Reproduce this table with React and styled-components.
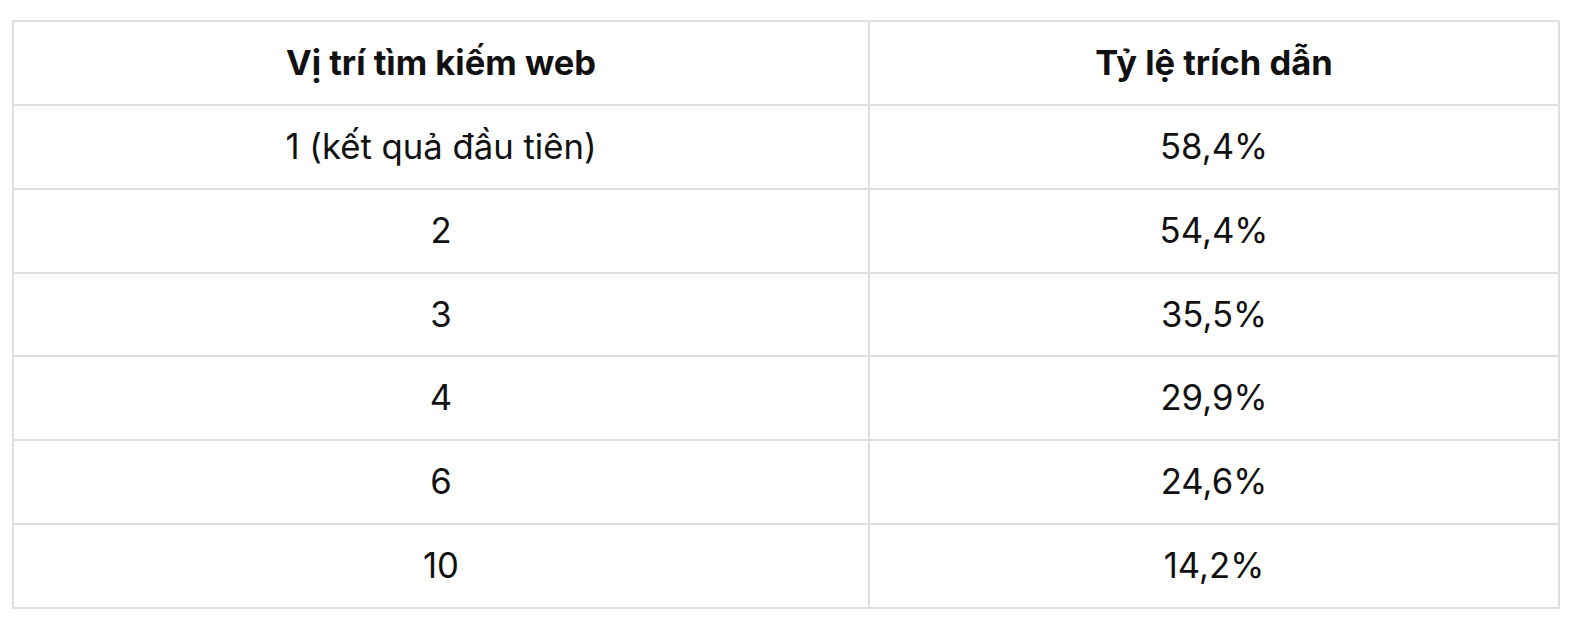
import React from "react";
import styled, { createGlobalStyle } from "styled-components";

const Global = createGlobalStyle`
  html, body { margin: 0; padding: 0; background: #ffffff; }
  body { font-family: Inter, "Noto Sans", sans-serif; color: #111111; }
`;

const Page = styled.div`
  padding: 20px 16px 20px 12px;
`;

const Table = styled.table`
  border-collapse: separate;
  border-spacing: 0;
  border-top: 2px solid #dedede;
  border-left: 2px solid #dedede;
  table-layout: fixed;
  width: 1546px;
`;

const Col = styled.col`
  width: ${(p) => p.$w}px;
`;

const Cell = styled.td`
  box-sizing: border-box;
  height: 83.857px;
  padding: 0 16px;
  border-right: 2px solid #dedede;
  border-bottom: 2px solid #dedede;
  text-align: center;
  vertical-align: middle;
  font-size: ${(p) => (p.$head ? "34.5px" : "34.7px")};
  line-height: 1.2;
  font-weight: ${(p) => (p.$head ? 700 : 400)};
  letter-spacing: 0;
  color: #111111;
`;

const rows = [
  ["1 (kết quả đầu tiên)", "58,4%"],
  ["2", "54,4%"],
  ["3", "35,5%"],
  ["4", "29,9%"],
  ["6", "24,6%"],
  ["10", "14,2%"],
];

export default function App() {
  return (
    <>
      <Global />
      <Page>
        <Table>
          <colgroup>
            <Col $w={856} />
            <Col $w={690} />
          </colgroup>
          <thead>
            <tr>
              <Cell as="th" $head>Vị trí tìm kiếm web</Cell>
              <Cell as="th" $head>Tỷ lệ trích dẫn</Cell>
            </tr>
          </thead>
          <tbody>
            {rows.map(([a, b]) => (
              <tr key={a}>
                <Cell>{a}</Cell>
                <Cell>{b}</Cell>
              </tr>
            ))}
          </tbody>
        </Table>
      </Page>
    </>
  );
}
